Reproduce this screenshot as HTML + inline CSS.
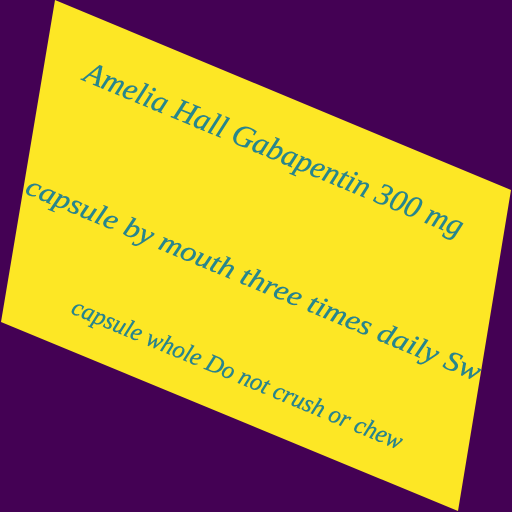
<!DOCTYPE html>
<html><head><style>html,body{margin:0;padding:0;background:#440154;}svg{display:block}</style></head>
<body>
<svg width="512" height="512" viewBox="0 0 512 512" xmlns="http://www.w3.org/2000/svg">
<rect width="512" height="512" fill="#440154"/>
<polygon points="55,0 511,190 458,511 1,322" fill="#fde725"/>
<g font-family="Liberation Serif, serif" font-style="italic" fill="#23898e" stroke="#2c6e8e" stroke-width="0.3">
<text x="82" y="80" font-size="31" textLength="408" lengthAdjust="spacingAndGlyphs" transform="rotate(22.6 82 80)">Amelia Hall Gabapentin 300 mg</text>
<text x="24" y="193" font-size="28" textLength="490" lengthAdjust="spacingAndGlyphs" transform="rotate(22.6 24 193)">capsule by mouth three times daily Sw</text>
<text x="70" y="313" font-size="25" textLength="356" lengthAdjust="spacingAndGlyphs" transform="rotate(22.6 70 313)">capsule whole Do not crush or chew</text>
</g>
</svg>
</body></html>
